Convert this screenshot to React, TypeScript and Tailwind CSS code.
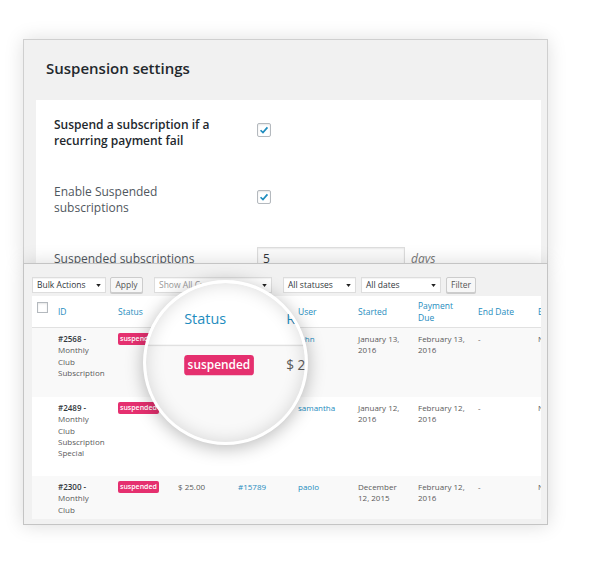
import React from 'react';

type Row = {
  id: string[];
  amount: string;
  order: string;
  user: string;
  started: string[];
  due: string[];
  end: string;
  expires: string;
  rowClass: string;
};

const headers: string[][] = [
  ['ID'],
  ['Status'],
  ['Recurring'],
  ['Order'],
  ['User'],
  ['Started'],
  ['Payment', 'Due'],
  ['End Date'],
  ['Expires'],
];

const rows: Row[] = [
  {
    id: ['#2568 -', 'Monthly', 'Club', 'Subscription'],
    amount: '$ 25.00',
    order: '#15812',
    user: 'john',
    started: ['January 13,', '2016'],
    due: ['February 13,', '2016'],
    end: '-',
    expires: 'Never',
    rowClass: 'h-[69px] bg-[#f9f9f9]',
  },
  {
    id: ['#2489 -', 'Monthly', 'Club', 'Subscription', 'Special'],
    amount: '$ 35.00',
    order: '#15801',
    user: 'samantha',
    started: ['January 12,', '2016'],
    due: ['February 12,', '2016'],
    end: '-',
    expires: 'Never',
    rowClass: 'h-[79px] bg-white',
  },
  {
    id: ['#2300 -', 'Monthly', 'Club', 'Subscription'],
    amount: '$ 25.00',
    order: '#15789',
    user: 'paolo',
    started: ['December', '12, 2015'],
    due: ['February 12,', '2016'],
    end: '-',
    expires: 'Never',
    rowClass: 'h-[60px] bg-[#f9f9f9]',
  },
];

export default function App() {
  return (
    <div className="relative h-[567px] w-[600px] overflow-hidden bg-white pt-[39px] font-['Open_Sans',sans-serif]">
      <SettingsPanel />
      <ListPanel />
      <Magnifier />
    </div>
  );
}

function SettingsPanel() {
  return (
    <div className="ml-[23px] h-[224px] w-[525px] overflow-hidden border-x border-t border-[#cfcfcf] bg-[#f1f1f1] shadow-[0_0_18px_rgba(0,0,0,0.13)]">
      <h2 className="pl-[22px] pt-[18px] text-[15px] font-semibold leading-[20px] text-[#23282d]">
        Suspension settings
      </h2>
      <div className="ml-[12px] mr-[6px] mt-[22px] h-[200px] bg-white pl-[18px]">
        <div className="flex pb-[18px] pt-[17px]">
          <p className="w-[203px] text-[12px] font-semibold leading-[16px] text-[#23282d]">
            Suspend a subscription if a
            <br />
            recurring payment fail
          </p>
          <Checkbox />
        </div>
        <div className="flex pb-[18px] pt-[17px]">
          <p className="w-[203px] text-[12px] leading-[16px] text-[#50575e]">
            Enable Suspended
            <br />
            subscriptions
          </p>
          <Checkbox />
        </div>
        <div className="flex items-center pt-[13px]">
          <p className="w-[203px] text-[12px] leading-[16px] text-[#50575e]">
            Suspended subscriptions
          </p>
          <div className="flex h-[24px] w-[148px] items-center border border-[#dddddd] bg-[#fbfbfb] pl-[5px] text-[12px] text-[#32373c] shadow-[inset_0_1px_2px_rgba(0,0,0,0.07)]">
            5
          </div>
          <span className="ml-[6px] text-[12px] italic text-[#777]">days</span>
        </div>
      </div>
    </div>
  );
}

function Checkbox() {
  return (
    <div className="mt-[6px] flex h-[14px] w-[14px] items-center justify-center rounded-[2px] border border-[#b4b9be] bg-white shadow-[inset_0_1px_2px_rgba(0,0,0,0.1)]">
      <svg viewBox="0 0 14 14" className="h-[12px] w-[12px]">
        <path d="M3 7.3 L5.8 10 L11 4" fill="none" stroke="#1e8cbe" strokeWidth="2" />
      </svg>
    </div>
  );
}

function ListPanel() {
  return (
    <div className="relative ml-[23px] h-[262px] w-[525px] border border-[#c4c4c4] bg-[#f1f1f1] pl-[8px] pt-[13px] shadow-[0_0_18px_rgba(0,0,0,0.15)]">
      <div className="flex h-4 items-stretch text-[8.5px]">
        <SelectBox label="Bulk Actions" widthClass="w-[74px]" />
        <ToolButton label="Apply" widthClass="ml-[4px] w-[33px]" />
        <SelectBox label="Show All Customers" widthClass="ml-[11px] w-[118px]" muted />
        <SelectBox label="All statuses" widthClass="ml-[11px] w-[73px]" />
        <SelectBox label="All dates" widthClass="ml-[5px] w-[80px]" />
        <ToolButton label="Filter" widthClass="ml-[5px] w-[30px]" />
      </div>
      <div className="mt-[3px]">
        <SubscriptionsTable />
      </div>
    </div>
  );
}

function SelectBox({
  label,
  widthClass,
  muted = false,
}: {
  label: string;
  widthClass: string;
  muted?: boolean;
}) {
  return (
    <div
      className={`flex items-center justify-between border border-[#dddddd] bg-white pl-[4px] pr-[4px] shadow-[inset_0_1px_1px_rgba(0,0,0,0.05)] ${widthClass}`}
    >
      <span className={`whitespace-nowrap ${muted ? 'text-[#999]' : 'text-[#32373c]'}`}>{label}</span>
      <svg viewBox="0 0 6 4" className="h-[3px] w-[5px] shrink-0">
        <polygon points="0,0 6,0 3,4" fill="#222" />
      </svg>
    </div>
  );
}

function ToolButton({ label, widthClass }: { label: string; widthClass: string }) {
  return (
    <div
      className={`flex items-center justify-center rounded-[2px] border border-[#cccccc] bg-[#f7f7f7] text-[#555] shadow-[0_1px_0_#ccc] ${widthClass}`}
    >
      {label}
    </div>
  );
}

function Lines({
  lines,
  className = '',
  boldFirst = false,
}: {
  lines: string[];
  className?: string;
  boldFirst?: boolean;
}) {
  return (
    <div className={`pr-[8px] leading-[11.3px] ${className}`}>
      {lines.map((line, i) => (
        <div
          key={line}
          className={`whitespace-nowrap ${boldFirst && i === 0 ? 'font-semibold text-[#32373c]' : ''}`}
        >
          {line}
        </div>
      ))}
    </div>
  );
}

function SubscriptionsTable() {
  return (
    <div className="h-[223px] w-[509px] overflow-hidden bg-white">
      <div className="grid h-[32px] w-[566px] grid-cols-[26px_repeat(9,60px)] border-b border-[#e1e1e1] bg-white">
        <div className="pl-[5px] pt-[6px]">
          <div className="h-[11px] w-[11px] border border-[#b4b9be] bg-white shadow-[inset_0_1px_2px_rgba(0,0,0,0.1)]" />
        </div>
        {headers.map((lines) => (
          <div key={lines[0]} className="flex items-center text-[8.5px] text-[#1e8cbe]">
            <Lines lines={lines} className="leading-[12px]" />
          </div>
        ))}
      </div>
      {rows.map((row) => (
        <div
          key={row.id[0]}
          className={`grid w-[566px] grid-cols-[26px_repeat(9,60px)] items-start pt-[5px] text-[8px] text-[#5a5a5a] ${row.rowClass}`}
        >
          <div />
          <Lines lines={row.id} boldFirst />
          <div className="-mt-[1px]">
            <span className="inline-block rounded-[2px] bg-[#e5306f] px-[2px] text-[7px] font-semibold leading-[12px] text-white">
              suspended
            </span>
          </div>
          <Lines lines={[row.amount]} />
          <Lines lines={[row.order]} className="text-[#1e8cbe]" />
          <Lines lines={[row.user]} className="text-[#1e8cbe]" />
          <Lines lines={row.started} />
          <Lines lines={row.due} />
          <Lines lines={[row.end]} />
          <Lines lines={[row.expires]} />
        </div>
      ))}
    </div>
  );
}

function Magnifier() {
  return (
    <div className="absolute left-[143px] top-[280px] z-20 h-[165px] w-[165px] overflow-hidden rounded-full border-[3px] border-white bg-white shadow-[0_3px_18px_rgba(0,0,0,0.28)]">
      <div className="absolute left-[-108px] top-[8.8px] origin-top-left scale-[1.7]">
        <SubscriptionsTable />
      </div>
      <div className="pointer-events-none absolute inset-0 rounded-full shadow-[inset_0_0_18px_rgba(0,0,0,0.15)]" />
    </div>
  );
}
